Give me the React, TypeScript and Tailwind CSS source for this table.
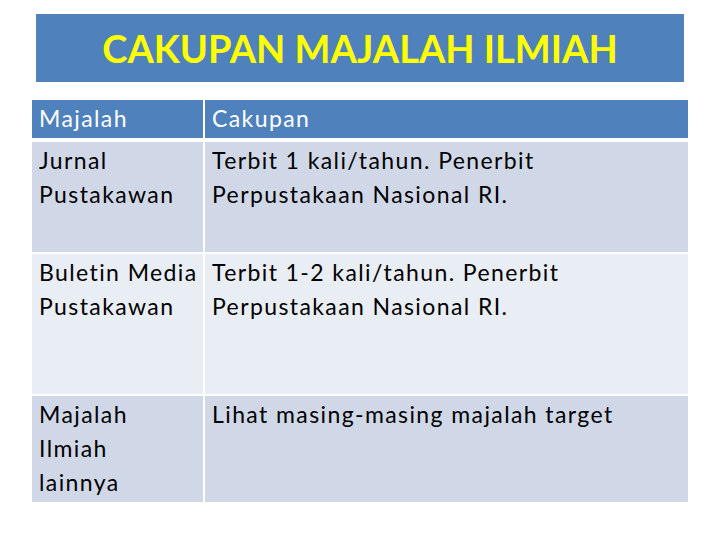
import * as React from 'react';

type Row = {
  majalah: string[];
  cakupan: string[];
  height: string;
  bg: string;
};

const rows: Row[] = [
  {
    majalah: ['Jurnal', 'Pustakawan'],
    cakupan: ['Terbit 1 kali/tahun. Penerbit', 'Perpustakaan Nasional RI.'],
    height: 'h-[110px]',
    bg: 'bg-[#d0d8e8]',
  },
  {
    majalah: ['Buletin Media', 'Pustakawan'],
    cakupan: ['Terbit 1-2 kali/tahun. Penerbit', 'Perpustakaan Nasional RI.'],
    height: 'h-[140px]',
    bg: 'bg-[#e9edf4]',
  },
  {
    majalah: ['Majalah', 'Ilmiah', 'lainnya'],
    cakupan: ['Lihat masing-masing majalah target'],
    height: 'h-[106px]',
    bg: 'bg-[#d0d8e8]',
  },
];

function Lines({ lines }: { lines: string[] }) {
  return (
    <>
      {lines.map((l, i) => (
        <div key={i} className="whitespace-nowrap">
          {l}
        </div>
      ))}
    </>
  );
}

export default function App() {
  return (
    <div className="w-[720px] h-[540px] bg-white pt-[14px] font-['Lato','Open_Sans',sans-serif] overflow-hidden">
      {/* judul */}
      <div className="ml-[36px] w-[648px] h-[68px] bg-[#4f81bd] flex items-center justify-center">
        <h1 className="text-[#ffff00] font-bold text-[38px] leading-none">
          CAKUPAN MAJALAH ILMIAH
        </h1>
      </div>

      {/* tabel */}
      <div className="ml-[32px] mt-[18px] w-[656px] flex flex-col text-[23px] leading-[34px] tracking-[1.4px]">
        <div className="flex h-[38px] gap-[2px] mb-[4px] text-white">
          <div className="w-[171px] bg-[#4f81bd] pl-[7px] pt-[1px]">Majalah</div>
          <div className="flex-1 bg-[#4f81bd] pl-[7px] pt-[1px]">Cakupan</div>
        </div>
        {rows.map((r, i) => (
          <div
            key={i}
            className={`flex gap-[2px] text-black ${r.height} ${i < rows.length - 1 ? 'mb-[2px]' : ''}`}
          >
            <div className={`w-[171px] ${r.bg} pl-[7px] pt-[1px]`}>
              <Lines lines={r.majalah} />
            </div>
            <div className={`flex-1 ${r.bg} pl-[7px] pt-[1px]`}>
              <Lines lines={r.cakupan} />
            </div>
          </div>
        ))}
      </div>
    </div>
  );
}
